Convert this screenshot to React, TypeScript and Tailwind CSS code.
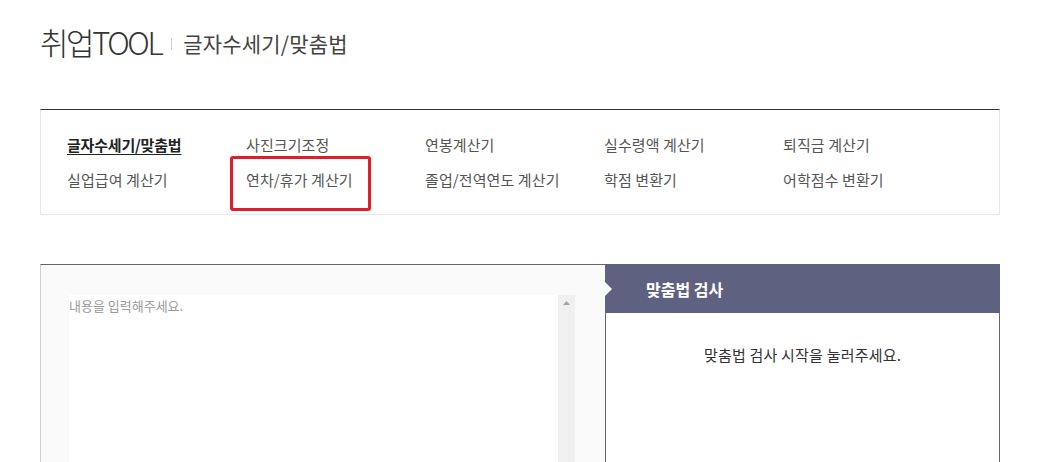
import React from "react";

const navRow1 = ["글자수세기/맞춤법", "사진크기조정", "연봉계산기", "실수령액 계산기", "퇴직금 계산기"];
const navRow2 = ["실업급여 계산기", "연차/휴가 계산기", "졸업/전역연도 계산기", "학점 변환기", "어학점수 변환기"];

export default function App() {
  const font = { fontFamily: '"Noto Sans CJK KR", "Noto Sans", sans-serif' };
  return (
    <div className="relative w-[1058px] h-[462px] overflow-hidden bg-white" style={font}>
      <div className="ml-[40px] w-[960px]">
        {/* Header */}
        <div className="flex items-center h-[34px] mt-[25px]">
          <span className="text-[31px] leading-[34px] tracking-[-2.4px] text-[#333] font-light">취업TOOL</span>
          <span className="ml-[10px] mr-[11px] w-px h-[12px] bg-[#d0d0d0] mt-[3px]" />
          <span className="text-[21px] leading-[34px] tracking-[0.2px] text-[#444] mt-[1px]">글자수세기/맞춤법</span>
        </div>

        {/* Nav box */}
        <div className="relative mt-[50px] border-t border-t-[#333] border-x border-b border-x-[#e6e6e6] border-b-[#e6e6e6] pl-[26px] pt-[17px] pb-[17px]">
          <div className="grid grid-cols-[179px_179px_179px_179px_179px]">
            {navRow1.map((t, i) => (
              <div
                key={t}
                className={
                  i === 0
                    ? "text-[15px] leading-[35px] text-[#222] font-semibold underline underline-offset-[3px] tracking-[-0.2px]"
                    : "text-[15px] leading-[35px] text-[#555] tracking-[0.1px]"
                }
              >
                {t}
              </div>
            ))}
            {navRow2.map((t) => (
              <div key={t} className="text-[15px] leading-[35px] text-[#555] tracking-[0.1px]">
                {t}
              </div>
            ))}
          </div>
          <div className="absolute left-[189px] top-[46px] w-[141px] h-[55px] border-[3px] border-[#dc1f2a] rounded-[3px]" />
        </div>

        {/* Bottom section */}
        <div className="flex mt-[49px]">
          <div className="w-[565px] h-[220px] border-t border-t-[#666] border-l border-l-[#d0d0d0] bg-[#fafafa] pt-[30px] pl-[28px]">
            <div className="flex w-[506px] h-[200px] bg-white">
              <div className="flex-1 pt-[1px] text-[13px] leading-[20px] text-[#999]">내용을 입력해주세요.</div>
              <div className="w-[17px] h-full bg-[#f0f0f0] flex justify-center pt-[6px]">
                <svg width="7" height="4" viewBox="0 0 7 4">
                  <polygon points="3.5,0 7,4 0,4" fill="#a3a3a3" />
                </svg>
              </div>
            </div>
          </div>
          <div className="w-[395px] flex flex-col">
            <div className="relative h-[49px] bg-[#5f6180] flex items-center pl-[41px]">
              <span className="text-[16px] font-bold text-white leading-[20px]">맞춤법 검사</span>
              <div className="absolute left-0 top-[18px] w-0 h-0 border-y-[7px] border-y-transparent border-l-[7px] border-l-[#fafafa]" />
            </div>
            <div className="flex-1 h-[200px] border-x border-x-[#666] bg-white pt-[32px] text-center text-[15px] leading-[20px] tracking-[0.2px] text-[#333]">
              맞춤법 검사 시작을 눌러주세요.
            </div>
          </div>
        </div>
      </div>
    </div>
  );
}
